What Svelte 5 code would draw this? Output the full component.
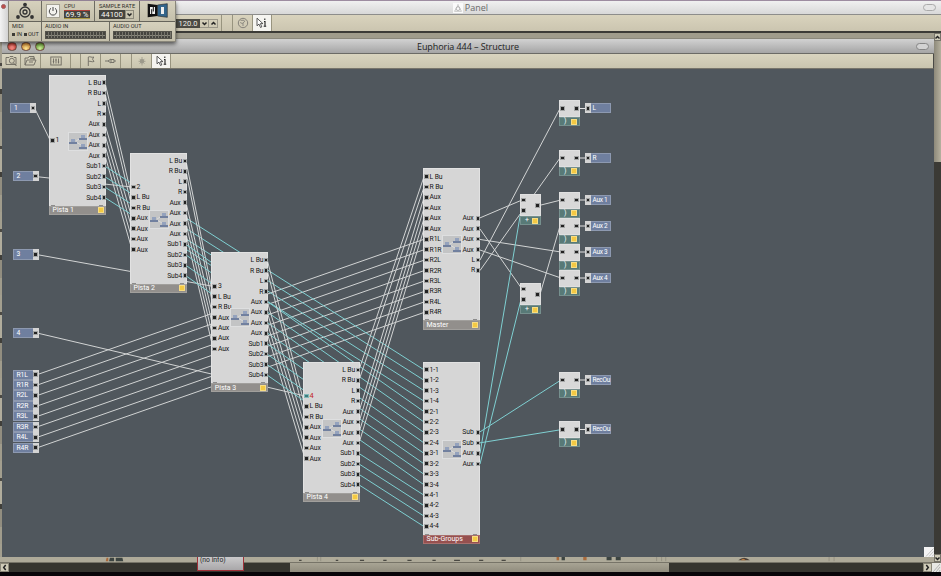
<script>
  const white = '#d2d4d4';
  const cyan = '#7fd0d2';
  const step = 10.45;

  const pistaOuts = ['L Bu', 'R Bu', 'L', 'R', 'Aux', 'Aux', 'Aux', 'Aux', 'Sub1', 'Sub2', 'Sub3', 'Sub4'];
  const pistaIns = ['L Bu', 'R Bu', 'Aux', 'Aux', 'Aux', 'Aux'];
  const recs = ['R1L', 'R1R', 'R2L', 'R2R', 'R3L', 'R3R', 'R4L', 'R4R'];
  const subIns = [1, 2, 3, 4].flatMap((a) => [1, 2, 3, 4].map((b) => `${a}-${b}`));

  const modules = [
    { name: 'Pista 1', x: 49, y: 74.5, h: 131, inTop: 66, ins: ['1'], outTop: 8.2, outs: pistaOuts, icon: 56 },
    { name: 'Pista 2', x: 130, y: 152.7, h: 131, inTop: 34.3, ins: ['2', ...pistaIns], outTop: 8.2, outs: pistaOuts, icon: 56 },
    { name: 'Pista 3', x: 211.3, y: 252, h: 131, inTop: 34.3, ins: ['3', ...pistaIns], outTop: 8.2, outs: pistaOuts, icon: 55 },
    { name: 'Pista 4', x: 303, y: 361.7, h: 131, inTop: 34.3, ins: ['4', ...pistaIns], outTop: 8.2, outs: pistaOuts, icon: 56, hot: true },
    { name: 'Master', x: 423, y: 168.3, h: 152, inTop: 8.3, ins: ['L Bu', 'R Bu', 'Aux', 'Aux', 'Aux', 'Aux', ...recs], outTop: 50, outs: ['Aux', 'Aux', 'Aux', 'Aux', 'L', 'R'], icon: 66, wide: true },
    { name: 'Sub-Groups', x: 423, y: 361.5, h: 173, inTop: 8.3, ins: subIns, outTop: 71, outs: ['Sub', 'Sub', 'Aux', 'Aux'], icon: 77, red: true, wide: true }
  ];

  const inputs = [
    { label: '1', x: 10, y: 108.3 },
    { label: '2', x: 12.5, y: 176.3 },
    { label: '3', x: 12.5, y: 254.6 },
    { label: '4', x: 12.5, y: 333 },
    ...recs.map((label, i) => ({ label, x: 12.5, y: 374.7 + i * step }))
  ];

  const outputs = [
    ['L', 108.5], ['R', 158], ['Aux 1', 200], ['Aux 2', 226], ['Aux 3', 252], ['Aux 4', 278], ['RecOu', 380], ['RecOu', 429.5]
  ];
  const adders = [194.4, 283.2];

  const wires = [];
  const link = (c, x1, y1, x2, y2) => wires.push({ c, x1, y1, x2, y2 });
  link(white, 35, 109, 50, 140);
  link(white, 37, 176.7, 132, 187);
  link(white, 37, 254.6, 213, 286.3);
  link(white, 37, 333, 305, 396);
  recs.forEach((_, i) => link(white, 37, 374.7 + i * step, 424, 239.3 + i * step));
  const pistas = modules.slice(0, 4);
  pistas.forEach((p, n) => {
    const ox = p.x + 56;
    const oy = p.y + 8.2;
    [0, 1, 4, 5, 6, 7].forEach((o, i) => {
      if (n < 3) link(white, ox, oy + o * step, pistas[n + 1].x + 2, pistas[n + 1].y + 34.3 + (i + 1) * step);
      else link(white, ox, oy + o * step, 424, 176.6 + i * step);
    });
    for (let i = 0; i < 4; i++) link(cyan, ox, oy + (8 + i) * step, 424, 369.8 + (n * 4 + i) * step);
  });
  link(white, 479, 218.3, 522, 200);
  link(white, 480, 229, 522, 289);
  link(white, 479, 239.3, 561, 252);
  link(white, 479, 249.7, 561, 278);
  link(white, 480, 260, 560, 108.5);
  link(white, 480, 270.5, 560, 158);
  link(white, 539, 205.5, 561, 200);
  link(white, 540, 294.3, 560, 226);
  link(cyan, 479, 432.5, 561, 380);
  link(cyan, 479, 443, 561, 429.7);
  link(cyan, 480, 453.5, 521, 210.5);
  link(cyan, 480, 464, 521, 299.5);
  outputs.forEach(([, y]) => link('#e2e2e2', 578, y, 587, y));
</script>

{#snippet cursorIcon()}
  <svg width="13" height="12" viewBox="0 0 13 12">
    <path d="M2 1.2v7.6l2-1.7 1.5 3.4 1.3-.6-1.4-3.3h2.5z" fill="#fff" stroke="#333" stroke-width=".8" />
    <path d="M9.8 1.4v1.5M9 4.5h1v4.6M8.7 9.2h2.5" fill="none" stroke="#222" stroke-width="1.1" />
  </svg>
{/snippet}

{#snippet arrow(d)}
  <svg width="7" height="7" viewBox="0 0 7 7"><path {d} fill="none" stroke="#222" stroke-width="1.5" /></svg>
{/snippet}

<div class="desktop">
  <section class="panel">
    <header class="ptitle">
      <span></span>
      <div class="name">
        <svg width="10" height="10" viewBox="0 0 10 10"><rect width="10" height="10" fill="#fafafa" /><path d="M5 1v2M1.5 8.3h7M5 2.5L1.5 8.3M5 2.5l3.5 5.8" stroke="#bbb" fill="none" stroke-width=".8" /><circle cx="5" cy="5.6" r="1.9" fill="none" stroke="#aaa" stroke-width=".8" /></svg>
        Panel
      </div>
      <i class="pill"></i>
    </header>
    <div class="pbar">
      <span class="lead"></span>
      <b class="tempo">120.0</b>
      <span class="spin">{@render arrow('M1.5 2.5l2 2 2-2')}</span>
      <span class="spin">{@render arrow('M1.5 4.5l2-2 2 2')}</span>
      <span class="cell" style:width="4px"></span>
      <span class="cell" style:width="11px"></span>
      <span class="cell" style:width="20px">
        <svg width="12" height="12" viewBox="0 0 12 12"><circle cx="6" cy="6" r="4.7" fill="none" stroke="#85827a" stroke-width="1" /><path d="M3.2 5.5l2 1 3-2.5M6 6v3M3.5 3.3h4" stroke="#85827a" fill="none" stroke-width=".9" /></svg>
      </span>
      <span class="cell lit" style:width="18.5px">{@render cursorIcon()}</span>
    </div>
    <div class="pbody">
      <div class="backdrop"></div>
      <div class="vscroll"><span class="vbtn">{@render arrow('M1.5 4.5l2-2 2 2')}</span><span class="vthumb"></span><span class="vtrack"></span><span class="vbtn">{@render arrow('M1.5 2.5l2 2 2-2')}</span></div>
    </div>
    <div class="hscroll">
      <span class="hbtn">{@render arrow('M4.7 1l-2 2.5 2 2.5')}</span>
      <span class="track"><span class="thumb"></span></span>
      <span class="hbtn">{@render arrow('M2.3 1l2 2.5-2 2.5')}</span>
      <svg class="grip" width="9" height="10" viewBox="0 0 9 10"><rect width="9" height="10" fill="#e8e8e4" /><path d="M1 9l7-8M4 9l4-5M7 9l1-2" stroke="#999" stroke-width=".7" /></svg>
    </div>
    <div class="floor"></div>
  </section>

  <svg class="scraps" width="941" height="6" viewBox="0 0 941 6">
    <path d="M38 1h2v4h-3zM578 0h3v4h-3zM610 0h4v4h-4z" fill="#a96a3c" />
    <path d="M42 1h5v4h-6zM49 1h8l1 4h-9zM584 0h4v4h-4zM638 0h6v4h-6zM649 0h6v4h-6z" fill="#3c4441" />
    <path d="M796 4q7-6 14 0z" fill="#4b4039" /><path d="M799 4q3-4 6 0z" fill="#c07b3b" />
    <path d="M313 4h3M342 4h5M370 4h4M399 4h5M429 4h4M455 4h7M485 4h5M512 4h5M269 4h3M184 4h2" stroke="#4a4943" stroke-width="1.3" />
    <path d="M149 0v5M154 0v5M166 0v5M291 0v5M295 0v5M535 0v5M698 0v5M704 0v5M709 0v5M905 0v5M911 0v5" stroke="#918e80" />
  </svg>
  <div class="noinfo">(no info)</div>

  <section class="structure">
    <header class="stitle">
      <div class="lights"><i class="r"></i><i class="y"></i><i class="g"></i></div>
      <div class="sname">Euphoria 444 – Structure</div>
      <i class="pill dark"></i>
    </header>
    <div class="sbar">
      <span class="cell" style:width="19px"><svg width="13" height="12" viewBox="0 0 13 12"><path d="M1 2.5h3l1-1h3l1 1h2v7H1z" fill="none" stroke="#6d6a60" stroke-width=".9" /><circle cx="6.8" cy="5.8" r="2.5" fill="none" stroke="#6d6a60" stroke-width=".9" /><path d="M8.5 8l3 3" stroke="#6d6a60" /></svg></span>
      <span class="cell" style:width="20px"><svg width="13" height="12" viewBox="0 0 13 12"><path d="M1 10V3h3l1-1.5h5V5M1 10l2-5h9l-2 5zM6 3.3h5M5 7h4" fill="none" stroke="#6d6a60" stroke-width=".9" /></svg></span>
      <span class="cell" style:width="30px"><svg width="12" height="10" viewBox="0 0 12 10"><rect x=".8" y="1" width="10.4" height="8" fill="none" stroke="#6d6a60" stroke-width=".9" /><path d="M3.5 2.5v5M6 2.5v5M8.5 2.5v5M2.8 5.5h1.4M5.3 4h1.4M7.8 6h1.4" stroke="#6d6a60" stroke-width=".9" /></svg></span>
      <span class="cell" style:width="10px"></span>
      <span class="cell" style:width="20px"><svg width="10" height="12" viewBox="0 0 10 12"><path d="M2.3 11V2c2-1 3 1 5.5 0L6.5 4.2 8 6.5c-2.5 1-3.5-1-5.5 0" fill="none" stroke="#77746a" /></svg></span>
      <span class="cell" style:width="20px"><svg width="13" height="8" viewBox="0 0 13 8"><path d="M1 4h3M10 4h2M4 4l3-2v4zM7 2.5h3v3H7" fill="none" stroke="#77746a" /></svg></span>
      <span class="cell" style:width="11px"></span>
      <span class="cell" style:width="20px"><svg width="10" height="10" viewBox="0 0 10 10"><circle cx="5" cy="5.3" r="2.2" fill="#9d9a8c" /><path d="M5 1v8.5M1.5 5.3h7M2.5 2.8l5 5M7.5 2.8l-5 5" stroke="#9d9a8c" stroke-width=".8" /></svg></span>
      <span class="cell lit" style:width="19px">{@render cursorIcon()}</span>
    </div>
    <div class="canvas"></div>
  </section>

  <svg class="wires" width="941" height="576" viewBox="0 0 941 576">
    {#each wires as w}
      <line x1={w.x1} y1={w.y1} x2={w.x2} y2={w.y2} stroke={w.c} stroke-width="1" />
    {/each}
  </svg>

  {#each modules as m}
    <div class="module" style:left="{m.x}px" style:top="{m.y}px">
      <div class="body" style:height="{m.h}px">
        <div class="ins" style:padding-top="{m.inTop - step / 2}px">
          {#each m.ins as label, i}
            <div class="row"><i class="port" class:live={m.hot && i === 0}></i><span class:hot={m.hot && i === 0}>{label}</span></div>
          {/each}
        </div>
        <div class="outs" style:padding-top="{m.outTop - step / 2}px">
          {#each m.outs as label}
            <div class="row"><span class:shift={label === 'Aux' || label === 'Sub'}>{label}</span><i class="port"></i></div>
          {/each}
        </div>
        <svg class="macro" style:top="{m.icon}px" width="20" height="19" viewBox="0 0 20 19">
          <rect x=".5" y=".5" width="19" height="18" fill="#c3c4c5" stroke="#dedfe0" />
          <path d="M8 9l5-3M8 10l5 3" stroke="#d9dadb" />
          <path d="M3 7h4v3H3zM13 3h4v3h-4zM13 12h4v3h-4z" fill="#94a2bd" />
          <path d="M1 10h8v2H1zM11 6h8v2h-8zM11 15h8v2h-8z" fill="#71809f" />
        </svg>
        <i class="nub left"></i><i class="nub right"></i>
      </div>
      <div class="foot" class:red={m.red}><span>{m.name}</span><i class="lamp"></i></div>
    </div>
  {/each}

  {#each inputs as t}
    <div class="term in" style:left="{t.x}px" style:top="{t.y - 5.2}px"><span>{t.label}</span><b><i class="port"></i></b></div>
  {/each}

  {#each outputs as [label, y]}
    <div class="small" style:left="559px" style:top="{y - 8.4}px">
      <div class="sbody gate"><i class="port"></i><i class="port"></i></div>
      <div class="sfoot"><span>)</span><i class="lamp"></i></div>
    </div>
    <div class="term out" style:left="585px" style:top="{y - 5.2}px"><b><i class="port"></i></b><span>{label}</span></div>
  {/each}

  {#each adders as y}
    <div class="small" style:left="520px" style:top="{y}px">
      <div class="sbody add"><div><i class="port"></i><i class="port"></i></div><i class="port"></i></div>
      <div class="sfoot"><span>+</span><i class="lamp"></i></div>
    </div>
  {/each}

  <svg class="corner" width="10" height="10" viewBox="0 0 10 10"><rect width="10" height="10" fill="#f4f4f4" /><path d="M2 9.5l7.5-8M5 9.5l4.5-5M8 9.5l1.5-2" stroke="#aaa" stroke-width=".7" /></svg>

  <section class="tools">
    <div class="handle"><i></i></div>
    <div class="grid">
      <div class="line top">
        <div class="box" style:width="33px">
          <svg width="20" height="18" viewBox="0 0 20 18"><circle cx="10" cy="10" r="5" fill="none" stroke="#333" stroke-width="1.3" /><circle cx="10" cy="10" r="2" fill="none" stroke="#333" stroke-width="1.3" /><circle cx="10" cy="2.6" r="1.9" fill="#333" /><circle cx="3" cy="15" r="1.9" fill="#333" /><circle cx="17" cy="15" r="1.9" fill="#333" /></svg>
        </div>
        <div class="box cpu" style:width="53px">
          <div class="power"><svg width="10" height="10" viewBox="0 0 10 10"><path d="M3 2.3a3.7 3.7 0 1 0 4 0M5 1v4" fill="none" stroke="#444" stroke-width="1" /></svg></div>
          <div class="stack"><em>CPU</em><b class="lcd load">69.9 %</b></div>
        </div>
        <div class="box rate" style:width="45px">
          <div class="stack"><em>SAMPLE RATE</em><div class="pick"><b class="lcd">44100</b><span>{@render arrow('M1.5 2.5l2 2 2-2')}</span></div></div>
        </div>
        <div class="box last">
          <svg width="21" height="15" viewBox="0 0 21 15"><path d="M.7.7L10.5 2v11L.7 14.3z" fill="#111" /><path d="M20.3.7L10.5 2v11l9.8 1.3z" fill="#33658b" stroke="#222" stroke-width=".6" /><path d="M3 4h5v7H3z" fill="#eee" /><path d="M4.700 6.200v5M6.300 4v4.500" stroke="#111" stroke-width="1" /><path d="M14 4h3v7h-3z" fill="#eee" /></svg>
        </div>
      </div>
      <div class="line">
        <div class="box midi" style:width="33px"><em>MIDI</em><div class="dots"><i></i><em>IN</em><i></i><em>OUT</em></div></div>
        <div class="box audio" style:width="68px"><em>AUDIO IN</em><div class="meter"></div></div>
        <div class="box audio last"><em>AUDIO OUT</em><div class="meter"></div></div>
      </div>
    </div>
  </section>
</div>

<style>
  :global(body) { background: #000; overflow: hidden; }
  .desktop { position: relative; width: 941px; height: 576px; overflow: hidden; font-family: Roboto, "Liberation Sans", sans-serif; font-size: 7px; color: #222; background: #080509; }
  .desktop * { box-sizing: border-box; }
  i, em { font-style: normal; }
  svg { display: block; flex: none; }

  .panel { display: flex; flex-direction: column; height: 576px; border-top: 1px solid #9d8ca0; }
  .ptitle { height: 14px; display: grid; grid-template-columns: 1fr auto 1fr; align-items: center; background: linear-gradient(#f0f0f0, #d8d8d8); padding-right: 5px; border-bottom: 1px solid #8d8d8b; color: #6a6a6a; }
  .name { display: flex; align-items: center; gap: 2px; padding-left: 5px; font: 9px "Open Sans", sans-serif; line-height: 13px; }
  .pill { justify-self: end; width: 13px; height: 7px; border: 1px solid #aaa; border-radius: 4px; background: #e5e5e5; }
  .pill.dark { border-color: #858585; background: #d2d2d2; }
  .pbar { height: 16px; display: flex; align-items: center; background: linear-gradient(#d9d3bd, #cbc5b0); }
  .lead { width: 176px; flex: none; }
  .tempo { width: 24px; height: 9px; background: #4b4a43; color: #f0eee6; font-weight: 400; font-size: 7.5px; line-height: 9.5px; text-align: center; }
  .spin { width: 9px; height: 9px; display: flex; align-items: center; justify-content: center; border: 1px solid #9b9789; border-left: 0; }
  .cell { height: 100%; flex: none; display: flex; align-items: center; justify-content: center; border-right: 1px solid #98947f; }
  .cell.lit { background: #f5f4f0; }
  .pbody { flex: 1; display: flex; border-top: 2px solid #3c3b37; min-height: 0; }
  .backdrop { flex: 1; background: repeating-linear-gradient(#a09c8c 0 17px, #a39f8f 17px 34px, #4b4943 34px 37px, #b1ad9d 37px 60px, #3f3e39 60px 65px, #928e80 65px 83px); background-position: 0 -4px; }
  .vscroll { width: 7px; display: flex; flex-direction: column; background: #3b3a35; }
  .vbtn { height: 8px; background: #cfcbb8; border: 1px solid #77746a; display: flex; justify-content: center; align-items: center; overflow: hidden; }
  .vthumb { height: 121px; background: linear-gradient(90deg, #8d897a, #b5b09e); }
  .vtrack { flex: 1; }
  .hscroll { height: 10px; display: flex; background: #3a3933; border-top: 1px solid #777468; }
  .hbtn { width: 9px; background: #cfcbb8; border: 1px solid #8a8778; display: flex; align-items: center; justify-content: center; }
  .track { flex: 1; padding-left: 281px; display: flex; background: #36352f; }
  .thumb { width: 379px; background: linear-gradient(#a8a494, #918d7e); }
  .floor { height: 4px; background: #080509; }
  .scraps { position: absolute; left: 0; top: 557px; background: #aeaa99; width: 934px; height: 5px; }
  .noinfo { position: absolute; left: 197px; top: 555px; width: 47px; height: 16px; background: linear-gradient(#cfcfd0, #a9a7a9); border: 1px solid #a03038; border-top: 0; padding-left: 2px; line-height: 10px; font-size: 6.8px; }

  .structure { position: absolute; left: 2px; top: 38px; width: 932px; height: 519px; display: flex; flex-direction: column; }
  .stitle { height: 16px; display: grid; grid-template-columns: 1fr auto 1fr; align-items: center; padding: 1px 5px 0 5px; background: linear-gradient(#d2d2d2, #a5a5a5); border-top: 1px solid #8b887c; border-bottom: 1px solid #6b6b66; }
  .lights { display: flex; gap: 4.5px; }
  .lights i { width: 9.5px; height: 9.5px; border-radius: 50%; border: 1px solid #6f4a3e; }
  .r { background: radial-gradient(circle at 50% 65%, #f0837a 0 20%, #c33d35 70%); }
  .y { background: radial-gradient(circle at 50% 75%, #ffe996, #d78f37 75%); }
  .g { background: radial-gradient(circle at 50% 75%, #d2f29a, #6aa13a 75%); }
  .sname { font: 9px "Open Sans", sans-serif; line-height: 13px; white-space: nowrap; color: #222; letter-spacing: -.08px; }
  .sbar { height: 15px; display: flex; background: linear-gradient(#d9d4bf, #c9c5af); border-bottom: 1px solid #77756b; border-right: 1px solid #4a4a46; }
  .canvas { flex: 1; background: #50575d; }
  .wires { position: absolute; left: 0; top: 0; }
  .corner { position: absolute; left: 924px; top: 547px; }

  .module { position: absolute; width: 57.2px; }
  .body { position: relative; display: flex; justify-content: space-between; background: #d6d6d6; border: 1px solid #e2e2e2; border-bottom: 0; }
  .ins, .outs { margin-top: -1px; white-space: nowrap; }
  .row { height: 10.45px; display: flex; align-items: center; gap: 2px; font-size: 6.8px; letter-spacing: -.12px; line-height: 10px; color: #161616; }
  .ins .row { padding-left: 1px; }
  .outs .row { justify-content: flex-end; gap: 1.5px; }
  .outs .row span.shift { margin-right: 1.5px; }
  .port { width: 2.6px; height: 2.6px; background: #222; outline: 1px solid #a4a6a6; flex: none; }
  .port.live { background: #3f7c7e; outline-color: #81b8b8; }
  .row .hot { color: #c32626; font-size: 7.5px; }
  .macro { position: absolute; left: 18px; }
  .nub { position: absolute; bottom: 0; width: 4px; height: 1px; background: #8c8c8c; }
  .nub.left { left: 1px; }
  .nub.right { right: 2px; }
  .foot { height: 9.3px; display: flex; justify-content: space-between; align-items: center; padding: 0 1px 0 2.500px; background: #928f8c; border: 1px solid #a19f9c; color: #fff; font-size: 7px; line-height: 8px; white-space: nowrap; }
  .foot.red { background: #96504f; border-color: #a86f6d; }
  .lamp { width: 6px; height: 6px; background: #f3c943; border: .5px solid #f8dd83; flex: none; }

  .term { position: absolute; width: 26px; height: 10.2px; display: flex; border: 1px solid #8d99b0; background: #6f7f9f; }
  .term span { flex: 1; color: #fff; font-size: 6.8px; line-height: 8.5px; white-space: nowrap; padding-left: 3px; letter-spacing: -.15px; }
  .term b { width: 6px; flex: none; background: #d4d4d4; display: flex; align-items: center; justify-content: center; margin: -1px; height: 10.2px; }
  .term.out span { padding-left: 2.5px; font-size: 6.5px; letter-spacing: -.3px; }
  .small { position: absolute; width: 20.5px; }
  .sbody { display: flex; justify-content: space-between; padding: 0 1px; background: #d8d8d8; border: 1px solid #e0e0e0; }
  .gate { height: 17px; padding-top: 6px; }
  .add { height: 22px; padding-top: 9px; }
  .add div { display: flex; flex-direction: column; gap: 7.800px; margin-top: -5.500px; }
  .sfoot { height: 9px; display: flex; justify-content: space-between; align-items: center; padding: 0 1.500px 0 4px; background: #587a77; border: 1px solid #76908e; color: #fff; font-size: 7px; line-height: 7px; }

  .tools { position: absolute; left: 0; top: 1px; width: 176px; height: 41px; display: flex; box-shadow: 0 2px 4px rgba(0, 0, 0, .6); background: #cbc6b2; }
  .handle { width: 8px; background: linear-gradient(90deg, #f3f3f3, #d2d2d2); padding: 3px 1px; }
  .handle i { display: block; width: 5px; height: 5px; border-radius: 50%; background: #c24b4b; border: 1px solid #9a6363; }
  .grid { flex: 1; display: flex; flex-direction: column; border: 1px solid #89867a; border-width: 0 1px 1px; }
  .line { display: flex; flex: 1; }
  .line.top { flex: none; height: 20.5px; border-bottom: 1px solid #66645b; }
  .box { display: flex; align-items: center; justify-content: center; background: linear-gradient(#d6d1bd, #c4bfab); border-right: 1px solid #6d6b61; flex: none; }
  .box.last { flex: 1; border-right: 0; }
  em { font-size: 5.6px; line-height: 6px; color: #2c2b28; white-space: nowrap; }
  .cpu { gap: 4px; }
  .power { width: 14px; height: 14px; background: #f3f2ee; border: 1px solid #a5a294; display: flex; align-items: center; justify-content: center; }
  .stack { display: flex; flex-direction: column; gap: 1px; }
  .lcd { display: block; width: 26px; height: 9px; background: #45443e; color: #f6f6f1; font-weight: 400; font-size: 7.8px; line-height: 9.5px; text-align: center; white-space: nowrap; }
  .load { border-top: 1px solid #b0413a; border-bottom: 1px solid #aa9a46; line-height: 8px; }
  .pick { display: flex; }
  .pick span { width: 9px; border: 1px solid #8d8a7c; display: flex; align-items: center; justify-content: center; }
  .midi, .audio { flex-direction: column; align-items: flex-start; justify-content: flex-start; padding: 1.500px 3px; gap: 2px; }
  .dots { display: flex; align-items: center; gap: 1.500px; }
  .dots i { width: 3px; height: 3px; background: #3c3b36; }
  .meter { align-self: stretch; height: 8px; background: repeating-linear-gradient(90deg, transparent 0 2px, #77756b 2px 3px), linear-gradient(#45443f 0 3.5px, #8b897d 3.5px 4.5px, #45443f 4.5px); border: 1px solid #55534b; }
</style>
